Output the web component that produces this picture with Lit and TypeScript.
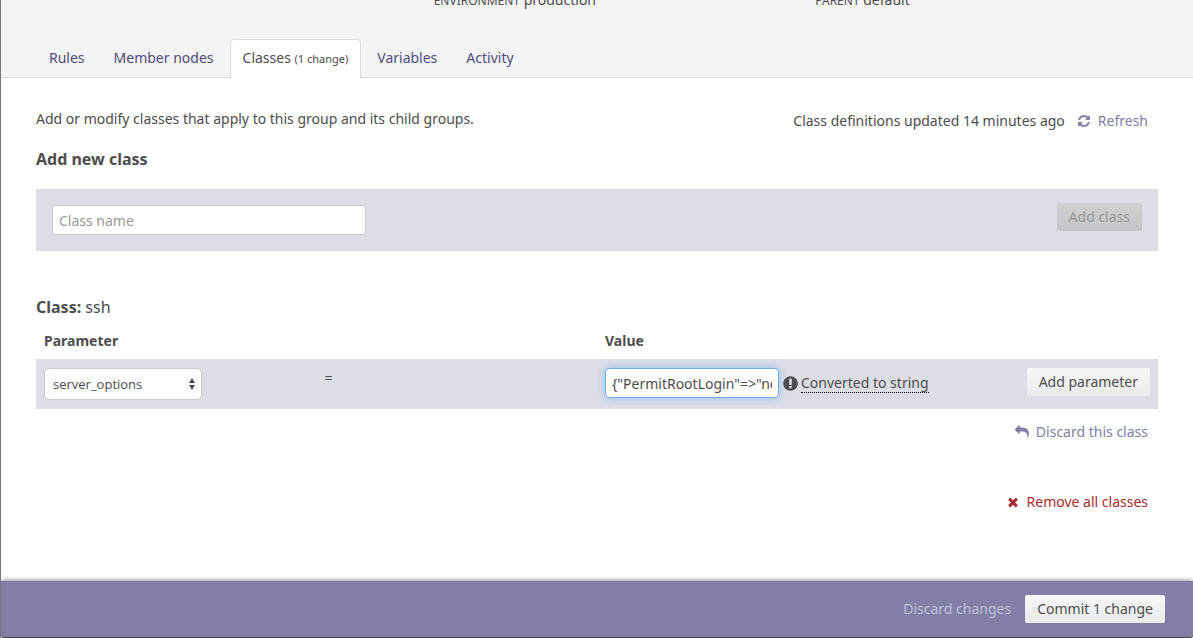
import { LitElement, html, css, svg } from "lit";
import { customElement, property, state } from "lit/decorators.js";

const ICONS: Record<string, string> = {
  refresh:
    "M1639 1056q0 5-1 7-64 268-268 434.5t-478 166.5q-146 0-282.5-55t-243.5-157l-129 129q-19 19-45 19t-45-19-19-45v-448q0-26 19-45t45-19h448q26 0 45 19t19 45-19 45l-137 137q71 66 161 102t187 36q134 0 250-65t186-179q11-17 53-117 8-23 30-23h192q13 0 22.5 9.5t9.5 22.5zm25-800v448q0 26-19 45t-45 19h-448q-26 0-45-19t-19-45 19-45l138-138q-148-137-349-137-134 0-250 65t-186 179q-11 17-53 117-8 23-30 23h-199q-13 0-22.5-9.5t-9.5-22.5v-7q65-268 270-434.5t480-166.5q146 0 284 55.5t245 156.5l130-129q19-19 45-19t45 19 19 45z",
  reply:
    "M1792 1120q0 166-127 451-3 7-10.5 24t-13.5 30-13 22q-12 17-28 17-15 0-23.5-10t-8.5-25q0-9 2.5-26.5t2.5-23.5q5-68 5-123 0-112-19.5-200.5t-54-153.5-89-112-117-77.5-142-48-155.5-23.5-171.5-6.5h-224v256q0 26-19 45t-45 19-45-19l-512-512q-19-19-19-45t19-45l512-512q19-19 45-19t45 19 19 45v256h224q713 0 875 403 53 134 53 333z",
  remove:
    "M1490 1322q0 40-28 68l-136 136q-28 28-68 28t-68-28l-294-294-294 294q-28 28-68 28t-68-28l-136-136q-28-28-28-68t28-68l294-294-294-294q-28-28-28-68t28-68l136-136q28-28 68-28t68 28l294 294 294-294q28-28 68-28t68 28l136 136q28 28 28 68t-28 68l-294 294 294 294q28 28 28 68z",
  alert:
    "M896 128q209 0 385.5 103t279.5 279.5 103 385.5-103 385.5-279.5 279.5-385.5 103-385.5-103-279.5-279.5-103-385.5 103-385.5 279.5-279.5 385.5-103zm128 1247v-190q0-14-9-23.5t-22-9.5h-192q-13 0-23 10t-10 23v190q0 13 10 23t23 10h192q13 0 22-9.5t9-23.5zm-2-344l18-621q0-12-10-18-10-8-24-8h-220q-14 0-24 8-10 6-10 18l17 621q0 10 10 17.5t24 7.5h185q14 0 23.5-7.5t10.5-17.5z",
};

@customElement("glyph-icon")
class GlyphIcon extends LitElement {
  @property() name = "refresh";

  static styles = css`
    :host {
      display: inline-flex;
      width: 14px;
      height: 14px;
    }
    .glyph {
      width: 100%;
      height: 100%;
      fill: currentColor;
    }
  `;

  render() {
    return html`<svg class="glyph" viewBox="0 0 1792 1792" aria-hidden="true">
      ${svg`<path d=${ICONS[this.name]}></path>`}
    </svg>`;
  }
}

interface Tab {
  label: string;
  note?: string;
}

@customElement("app-root")
class AppRoot extends LitElement {
  @state() private active = "Classes";

  private tabs: Tab[] = [
    { label: "Rules" },
    { label: "Member nodes" },
    { label: "Classes", note: "(1 change)" },
    { label: "Variables" },
    { label: "Activity" },
  ];

  static styles = css`
    :host {
      display: flex;
      flex-direction: column;
      box-sizing: border-box;
      min-height: 100vh;
      overflow: hidden;
      border-left: 1px solid #777;
      background: #fff;
      color: #4d4d4d;
      font: 14px/20px "Noto Sans", "Open Sans", sans-serif;
    }
    * {
      box-sizing: border-box;
    }
    a {
      color: #827ea6;
      text-decoration: none;
    }
    button,
    input,
    select {
      font: inherit;
      color: inherit;
      margin: 0;
    }
    .top {
      padding: 0 35px;
      background: #f4f4f4;
      border-bottom: 1px solid #ddd;
    }
    .meta {
      display: grid;
      grid-template-columns: repeat(3, 1fr);
      gap: 20px;
      margin: -10px -19px 28px 16px;
    }
    .meta-label {
      font-size: 12px;
      text-transform: uppercase;
    }
    .tabs {
      display: flex;
      gap: 3px;
      margin-bottom: -1px;
    }
    .tab {
      padding: 8px 12px 9px;
      border: 1px solid transparent;
      border-bottom: 0;
      border-radius: 4px 4px 0 0;
      color: #504a80;
    }
    .tab.current {
      background: #fff;
      border-color: #ddd;
      color: #4d4d4d;
    }
    .note {
      font-size: 11px;
    }
    .content {
      flex: 1;
      padding: 31px 35px 20px;
    }
    .intro {
      display: flex;
      justify-content: space-between;
      align-items: flex-start;
      padding-right: 10px;
    }
    .intro p {
      margin: 0;
    }
    .updated {
      display: flex;
      gap: 12px;
      padding-top: 2px;
    }
    .action {
      display: inline-flex;
      align-items: center;
      gap: 7px;
    }
    .title {
      margin: 18px 0 20px;
      font-size: 16px;
      line-height: 20px;
      font-weight: 700;
    }
    .title span {
      font-weight: 400;
    }
    .add {
      display: flex;
      justify-content: space-between;
      align-items: flex-start;
      padding: 14px 16px 16px;
      background: #dddde6;
    }
    .field {
      height: 30px;
      padding: 4px 6px;
      border: 1px solid #ccc;
      border-radius: 4px;
      background: #fff;
      outline: 0;
    }
    .field::placeholder {
      color: #999;
      opacity: 1;
    }
    .name {
      width: 314px;
      margin-top: 2px;
    }
    .value {
      width: 174px;
      border-color: #66afe9;
      box-shadow: 0 0 8px #66afe999;
    }
    .btn {
      height: 28px;
      padding: 0 12px;
      border: 0;
      border-radius: 2px;
      background: linear-gradient(#f7f7f7, #ebebeb);
      white-space: nowrap;
    }
    .btn:disabled {
      background: linear-gradient(#cfcfcf, #c6c6c6);
      color: #999;
    }
    .params {
      width: 100%;
      table-layout: fixed;
      border-collapse: collapse;
    }
    .params th {
      padding: 0 8px 8px;
      text-align: left;
    }
    .params td {
      height: 50px;
      padding: 9px 8px;
      vertical-align: top;
      background: #dddde6;
    }
    .quarter {
      width: 25%;
    }
    .wide {
      width: 35%;
    }
    .params .end {
      text-align: right;
    }
    .picker {
      display: grid;
      width: 158px;
    }
    .picker > * {
      grid-area: 1 / 1;
    }
    .select {
      appearance: none;
      height: 32px;
      padding: 0 24px 0 8px;
      border: 1px solid #ccc;
      border-radius: 5px;
      background: #fff;
      font-family: "Open Sans", sans-serif;
      font-size: 13px;
    }
    .arrows {
      width: 6px;
      height: 12px;
      margin-right: 7px;
      place-self: center end;
      pointer-events: none;
      fill: #4d4d4d;
    }
    .value-cell {
      display: flex;
      align-items: center;
    }
    .alert {
      width: 17px;
      height: 17px;
      margin: 0 2px 0 3px;
    }
    .hint {
      border-bottom: 1px dotted #000;
      line-height: 18px;
      white-space: nowrap;
    }
    .row-end {
      display: flex;
      justify-content: flex-end;
      padding-right: 10px;
      margin-top: 13px;
    }
    .row-end.far {
      margin-top: 50px;
    }
    .class-title {
      margin: 46px 0 14px;
    }
    .danger {
      color: #a82b2b;
    }
    .bar {
      display: flex;
      justify-content: flex-end;
      align-items: center;
      gap: 14px;
      padding: 14px 28px;
      background: #827ea6;
      border-bottom: 1px solid #444;
      border-radius: 0 0 3px 3px;
      box-shadow: 0 0 5px #0009;
    }
    .bar a {
      color: #c1bfd6;
    }
  `;

  render() {
    return html`
      <header class="top">
        <div class="meta">
          <div></div>
          <div><span class="meta-label">Environment</span> production</div>
          <div><span class="meta-label">Parent</span> default</div>
        </div>
        <nav class="tabs">
          ${this.tabs.map(
            (t) => html`<a
              href="#"
              class="tab ${t.label === this.active ? "current" : ""}"
              @click=${(e: Event) => {
                e.preventDefault();
                this.active = t.label;
              }}
              >${t.label}${t.note ? html` <span class="note">${t.note}</span>` : ""}</a
            >`
          )}
        </nav>
      </header>
      <main class="content">
        <div class="intro">
          <p>Add or modify classes that apply to this group and its child groups.</p>
          <div class="updated">
            <span>Class definitions updated 14 minutes ago</span>
            <a class="action" href="#"><glyph-icon name="refresh"></glyph-icon>Refresh</a>
          </div>
        </div>
        <h2 class="title">Add new class</h2>
        <form class="add">
          <input class="field name" type="text" placeholder="Class name" aria-label="Class name" />
          <button class="btn" type="submit" disabled>Add class</button>
        </form>
        <h2 class="title class-title">Class: <span>ssh</span></h2>
        <table class="params">
          <thead>
            <tr>
              <th class="quarter">Parameter</th>
              <th class="quarter"></th>
              <th class="wide">Value</th>
              <th></th>
            </tr>
          </thead>
          <tbody>
            <tr>
              <td>
                <div class="picker">
                  <select class="select" aria-label="Parameter">
                    <option>server_options</option>
                  </select>
                  <svg class="arrows" viewBox="0 0 6 12" aria-hidden="true">
                    <path d="M3 0 6 5H0zM3 12 0 7h6z"></path>
                  </svg>
                </div>
              </td>
              <td>=</td>
              <td>
                <div class="value-cell">
                  <input
                    class="field value"
                    type="text"
                    aria-label="Value"
                    .value=${'{"PermitRootLogin"=>"no"}'}
                  />
                  <glyph-icon class="alert" name="alert"></glyph-icon>
                  <span class="hint">Converted to string</span>
                </div>
              </td>
              <td class="end"><button class="btn" type="button">Add parameter</button></td>
            </tr>
          </tbody>
        </table>
        <div class="row-end">
          <a class="action" href="#"><glyph-icon name="reply"></glyph-icon>Discard this class</a>
        </div>
        <div class="row-end far">
          <a class="action danger" href="#"><glyph-icon name="remove"></glyph-icon>Remove all classes</a>
        </div>
      </main>
      <footer class="bar">
        <a href="#">Discard changes</a>
        <button class="btn" type="button">Commit 1 change</button>
      </footer>
    `;
  }
}
